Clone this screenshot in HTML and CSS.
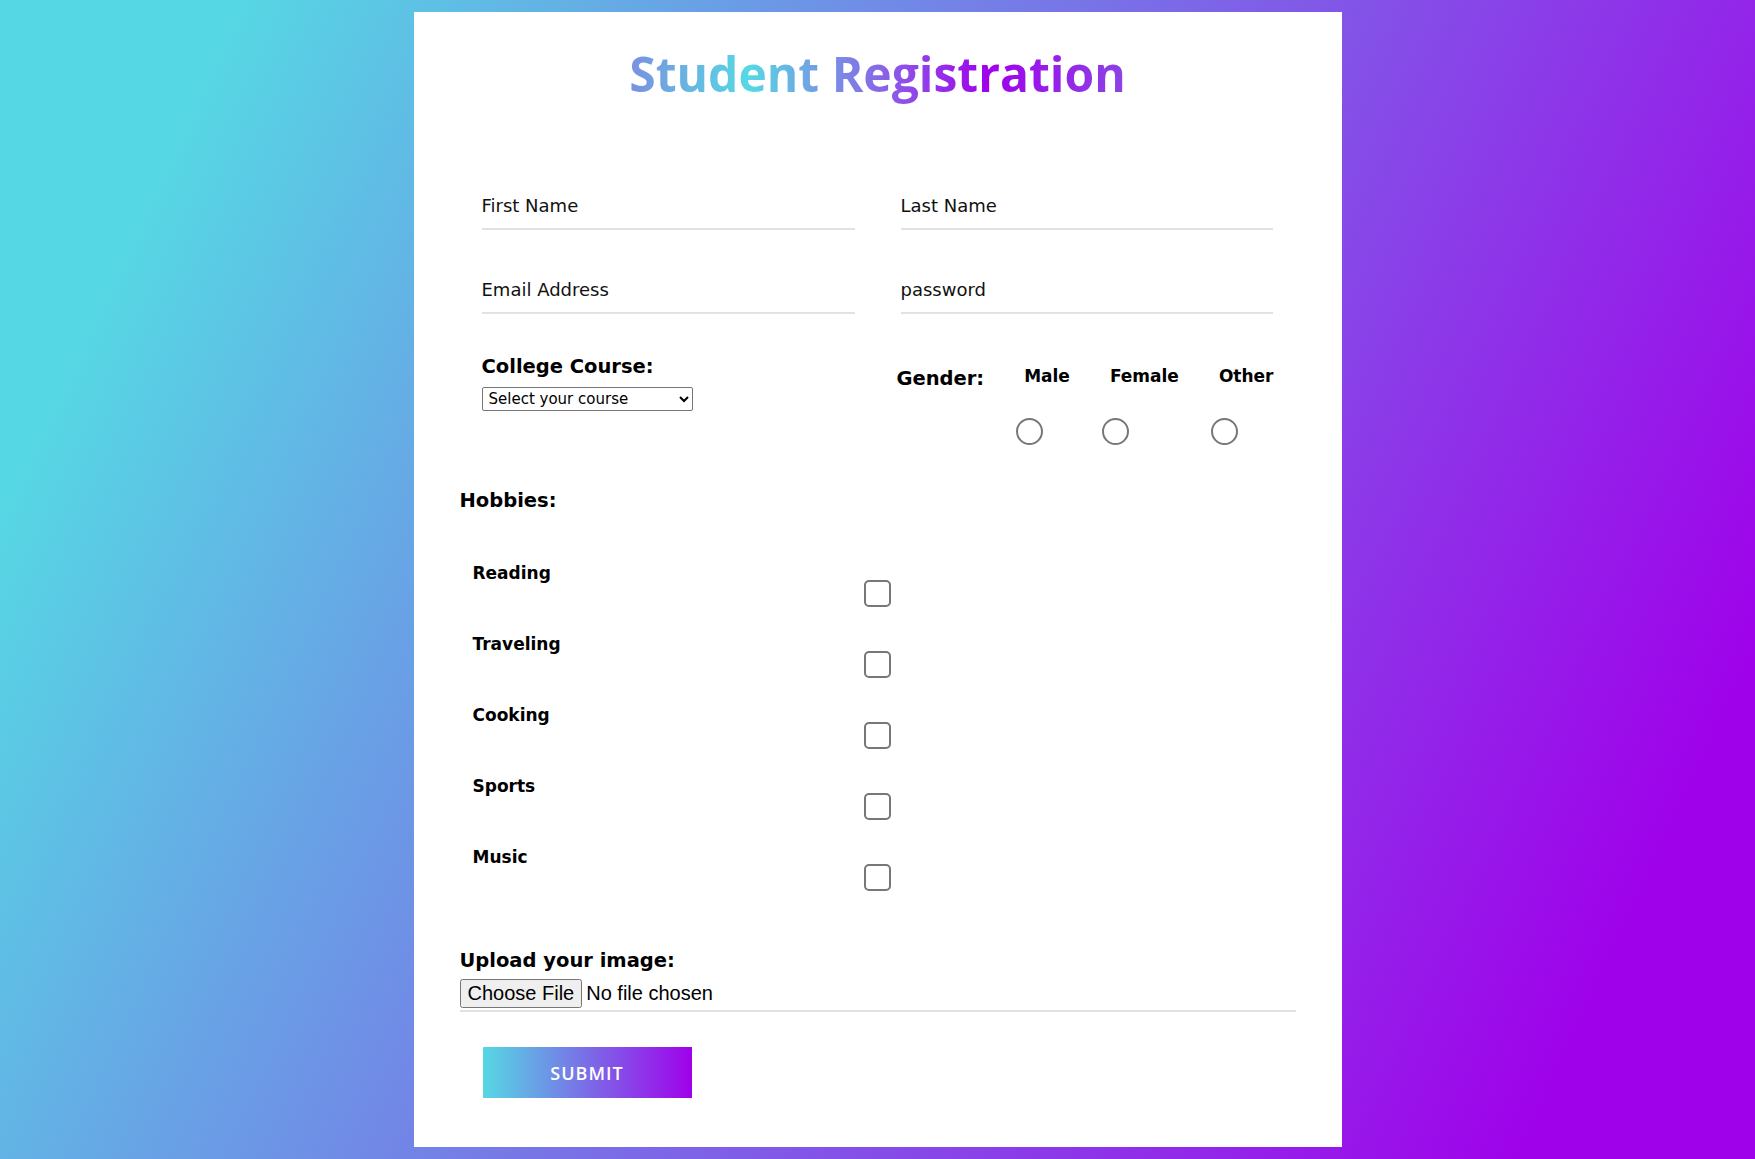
FILE: index.html
```html
<!DOCTYPE html>
<html lang="en">
<head>
<meta charset="utf-8">
<title>Student Registration</title>
<link rel="stylesheet" href="styles.css">
</head>
<body>
<div class="card">
  <h1 class="title">Student Registration</h1>
  <form class="form">
    <div class="fields">
      <input class="field" type="text" placeholder="First Name">
      <input class="field" type="text" placeholder="Last Name">
      <input class="field" type="email" placeholder="Email Address">
      <input class="field" type="password" placeholder="password">
    </div>
    <div class="choice-row">
      <div class="course">
        <label class="big-label">College Course:</label>
        <select class="select">
          <option>Select your course</option>
        </select>
      </div>
      <div class="gender">
        <span class="big-label gender-label">Gender:</span>
        <div class="option">
          <span class="small-label">Male</span>
          <input class="radio" type="radio" name="gender">
        </div>
        <div class="option">
          <span class="small-label">Female</span>
          <input class="radio" type="radio" name="gender">
        </div>
        <div class="option">
          <span class="small-label">Other</span>
          <input class="radio" type="radio" name="gender">
        </div>
      </div>
    </div>
    <div class="big-label hobbies-label">Hobbies:</div>
    <div class="hobbies">
      <div class="hobby"><span class="small-label">Reading</span><input class="check" type="checkbox"></div>
      <div class="hobby"><span class="small-label">Traveling</span><input class="check" type="checkbox"></div>
      <div class="hobby"><span class="small-label">Cooking</span><input class="check" type="checkbox"></div>
      <div class="hobby"><span class="small-label">Sports</span><input class="check" type="checkbox"></div>
      <div class="hobby"><span class="small-label">Music</span><input class="check" type="checkbox"></div>
    </div>
    <div class="big-label upload-label">Upload your image:</div>
    <div class="upload">
      <input class="file" type="file">
    </div>
    <button class="submit" type="button">SUBMIT</button>
  </form>
</div>
</body>
</html>
```

FILE: styles.css
```css
* {
  box-sizing: border-box;
}

html, body {
  margin: 0;
  padding: 0;
}

body {
  min-height: 100vh;
  background: linear-gradient(115deg, #56d8e4 10%, #9f01ea 90%);
  font-family: "DejaVu Sans", sans-serif;
  color: #000;
  padding: 12px 0;
}

.card {
  width: 928px;
  margin: 0 auto;
  background: #fff;
  padding: 32px 46px 49px;
}

.title {
  font-family: "Open Sans", sans-serif;
  font-size: 48px;
  line-height: 60px;
  font-weight: 700;
  text-align: center;
  background: linear-gradient(90deg, #7a90e0 0%, #56d8e4 24%, #6fa6e4 36%, #8a5fe8 52%, #a000eb 72%, #8c45e6 100%);
  -webkit-background-clip: text;
  background-clip: text;
  color: transparent;
  width: 500px;
  margin: 0 auto;
}

.form {
  display: flex;
  flex-direction: column;
}

.fields {
  display: grid;
  grid-template-columns: 373px 372px;
  column-gap: 46px;
  row-gap: 36px;
  margin: 78px 22px 0;
}

.field {
  height: 48px;
  border: none;
  border-bottom: 2px solid #e2e2e2;
  padding: 0;
  font-family: "DejaVu Sans", sans-serif;
  font-size: 18px;
  color: #000;
  outline: none;
  background: transparent;
}

.field::placeholder {
  color: #111;
}

.choice-row {
  display: flex;
  justify-content: space-between;
  align-items: flex-start;
  margin: 39px 22px 0;
}

.course {
  display: flex;
  flex-direction: column;
  gap: 6px;
}

.big-label {
  font-size: 19.5px;
  font-weight: 700;
  line-height: 28px;
}

.small-label {
  font-size: 17px;
  font-weight: 700;
  line-height: 24px;
}

.select {
  width: 211px;
  height: 24px;
  font-family: "DejaVu Sans", sans-serif;
  font-size: 15px;
  color: #000;
  border: 1px solid #767676;
  border-radius: 2px;
  background: #fff;
  padding: 0 2px;
}

.gender {
  display: flex;
  align-items: flex-start;
  gap: 40px;
  margin-top: 12px;
}

.option {
  display: flex;
  flex-direction: column;
  align-items: flex-start;
  gap: 30px;
  margin-top: -1px;
}

.radio {
  appearance: none;
  -webkit-appearance: none;
  width: 27px;
  height: 27px;
  margin: 0 0 0 -8px;
  border: 2px solid #777;
  border-radius: 50%;
  background: #fff;
}

.hobbies-label {
  margin-top: 42px;
}

.hobbies {
  margin-top: 46px;
  display: flex;
  flex-direction: column;
}

.hobby {
  display: grid;
  grid-template-columns: 1fr 27px 1fr;
  height: 71px;
  padding-left: 13px;
}

.hobby .small-label {
  grid-column: 1;
}

.check {
  grid-column: 2;
  appearance: none;
  -webkit-appearance: none;
  width: 27px;
  height: 27px;
  margin: 19px 0 0 -7px;
  border: 2px solid #777;
  border-radius: 5px;
  background: #fff;
}

.upload-label {
  margin-top: 31px;
}

.upload {
  margin-top: 4px;
  padding-bottom: 2px;
  border-bottom: 2px solid #e2e2e2;
}

.file {
  font-family: "Liberation Sans", Arial, sans-serif;
  font-size: 20px;
  color: #000;
}

.submit {
  margin: 35px 0 0 23px;
  width: 209px;
  height: 51px;
  border: none;
  background: linear-gradient(90deg, #56d8e4, #9f01ea);
  color: #fff;
  font-family: "Open Sans", sans-serif;
  font-size: 18px;
  font-weight: 600;
  letter-spacing: 1px;
  align-self: flex-start;
}
```
